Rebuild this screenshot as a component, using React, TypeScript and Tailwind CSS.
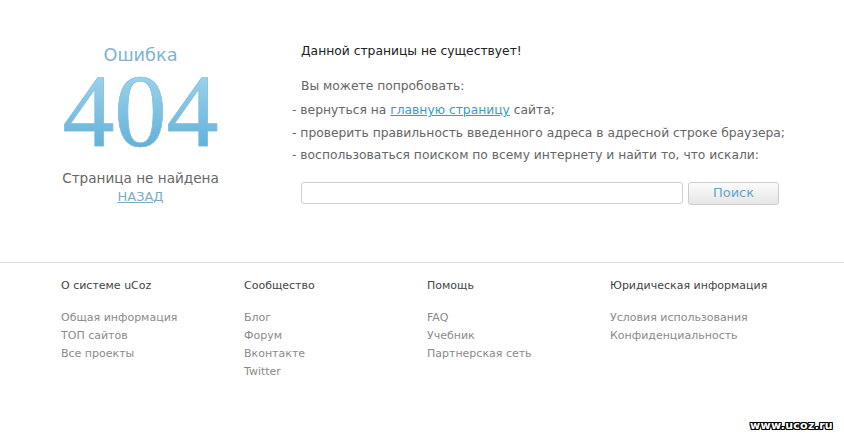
import React from 'react';

const FOOTER = [
  { title: 'О системе uCoz', links: ['Общая информация', 'ТОП сайтов', 'Все проекты'] },
  { title: 'Сообщество', links: ['Блог', 'Форум', 'Вконтакте', 'Twitter'] },
  { title: 'Помощь', links: ['FAQ', 'Учебник', 'Партнерская сеть'] },
  { title: 'Юридическая информация', links: ['Условия использования', 'Конфиденциальность'] },
];

const font = { fontFamily: '"DejaVu Sans", Verdana, sans-serif' };

const App: React.FC = () => {
  return (
    <div className="relative w-[844px] h-[440px] bg-white overflow-hidden text-[12.3px]" style={font}>
      {/* Top block */}
      <div className="flex h-[262px]">
        <div className="w-[281px] flex flex-col items-center pt-[44px]">
          <div className="text-[17.7px] leading-[22px] text-[#7db3cf]">Ошибка</div>
          <div
            className="text-[104px] leading-[86px] mt-[2px] bg-gradient-to-b from-[#a3d4eb] to-[#5aaed8] bg-clip-text text-transparent"
            style={{ fontFamily: '"Liberation Serif", "Times New Roman", serif', WebkitTextStroke: '0.6px #7cc0e2' }}
          >
            404
          </div>
          <div className="text-[13.6px] leading-[18px] text-[#666] mt-[15px]">Страница не найдена</div>
          <a href="#" className="text-[13px] leading-[19px] text-[#79abc5] underline">НАЗАД</a>
        </div>

        <div className="flex-1 pt-[42px]">
          <p className="pl-[20px] text-[#222] leading-[18px]">Данной страницы не существует!</p>
          <p className="pl-[20px] text-[#666] mt-[17px] leading-[18px]">Вы можете попробовать:</p>
          <ul className="text-[#666] mt-[4px] pl-[11px] leading-[22.5px]">
            <li>- вернуться на <a href="#" className="text-[#3a9cc4] underline">главную страницу</a> сайта;</li>
            <li>- проверить правильность введенного адреса в адресной строке браузера;</li>
            <li>- воспользоваться поиском по всему интернету и найти то, что искали:</li>
          </ul>
          <div className="flex items-center mt-[15px] pl-[20px] gap-[5px]">
            <input className="w-[382px] h-[22px] border border-[#cfcfcf] rounded-[3px] outline-none" />
            <button className="w-[91px] h-[23px] border border-[#cdcdcd] rounded-[3px] bg-gradient-to-b from-[#fbfbfb] to-[#e6e6e6] text-[13px] text-[#62a6c6]">
              Поиск
            </button>
          </div>
        </div>
      </div>

      {/* Footer */}
      <div className="border-t border-[#dedede] flex pl-[61px] pt-[16px] text-[11px]">
        {FOOTER.map((col) => (
          <div key={col.title} className="w-[183px]">
            <div className="text-[#444] leading-[14px]">{col.title}</div>
            <ul className="mt-[16px] text-[#8a8a8a] leading-[18px]">
              {col.links.map((l) => (
                <li key={l}>{l}</li>
              ))}
            </ul>
          </div>
        ))}
      </div>

      {/* Watermark */}
      <div
        className="absolute right-[11px] bottom-[6px] text-[11px] font-bold text-white tracking-[0.3px]"
        style={{ textShadow: '1px 0 #000, -1px 0 #000, 0 1px #000, 0 -1px #000, 1px 1px #000, -1px -1px #000, 1px -1px #000, -1px 1px #000' }}
      >
        www.ucoz.ru
      </div>
    </div>
  );
};

export default App;
